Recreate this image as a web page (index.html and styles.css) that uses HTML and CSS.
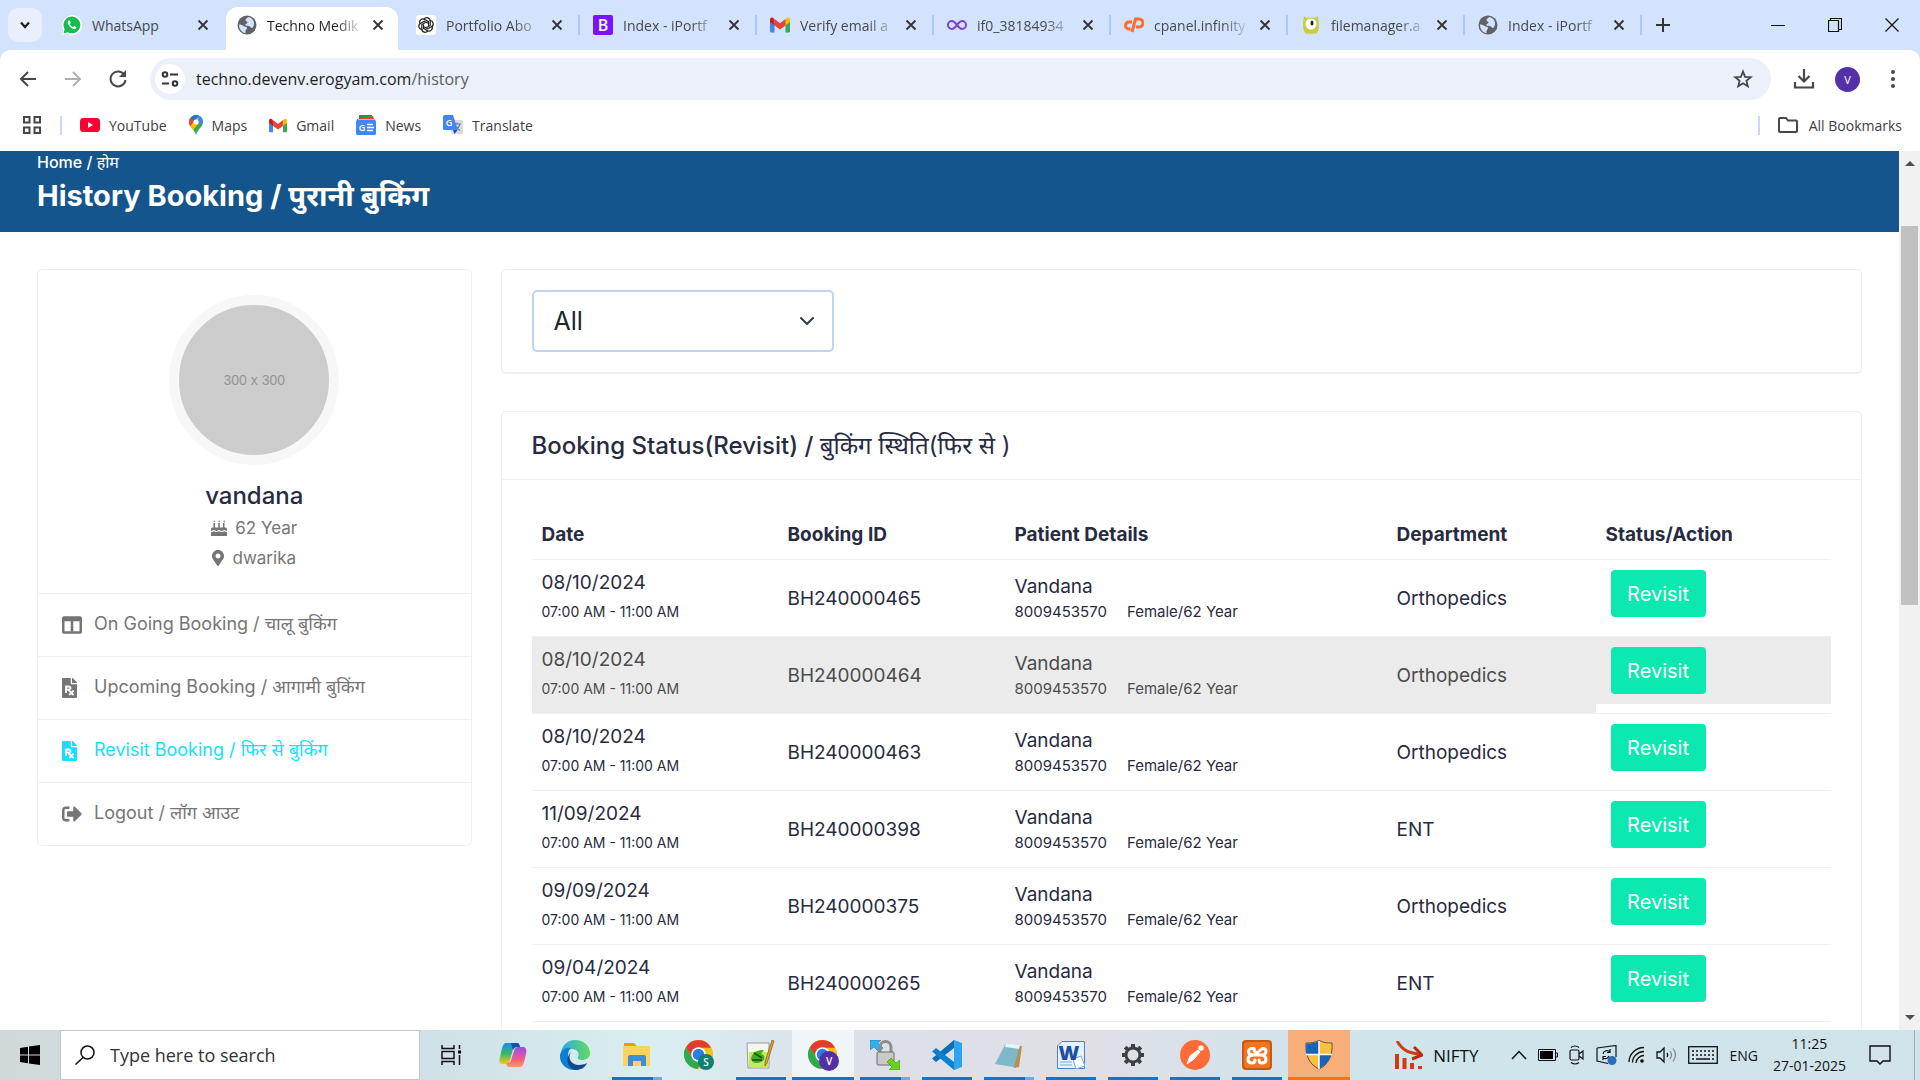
FILE: index.html
```html
<!DOCTYPE html>
<html lang="en">
<head>
  <meta charset="UTF-8" />
  <title>Techno Medik - History Booking</title>
  <link rel="stylesheet" href="styles.css">
</head>
<body>

<!-- shared icons -->
<svg class="defs" width="0" height="0">
  <symbol id="close" viewBox="0 0 12 12"><path d="M1.5 1.5l9 9M10.5 1.5l-9 9" stroke="currentColor" stroke-width="1.8" fill="none"/></symbol>
  <symbol id="globe" viewBox="0 0 20 20"><circle cx="10" cy="10" r="9.5" fill="#5f6368"/><path d="M2 9.500c2 0 3 .5 4.500 1.500s3.500.5 3.500 2-1.500 1.500-1.500 3v2.200C4.500 17.500 2 14 2 9.500zM11 2c-1 1.500-2.500 1.500-2.500 3s2 1 2 2.500-2.500 1-2 2.500 4 .5 5 2 1.500 1 2.200.6C18.500 9 17 3 11 2z" fill="#d3e2fd"/></symbol>
  <symbol id="gmail" viewBox="0 0 20 16"><path d="M0 2v12a1.500 1.500 0 0 0 1.500 1.500H4.500V6z" fill="#4285f4"/><path d="M20 2v12a1.500 1.500 0 0 1-1.500 1.500H15.500V6z" fill="#34a853"/><path d="M4.500 3v5.500L0 5V2.500C0 .5 2-.2 3.500 1z" fill="#c5221f"/><path d="M15.500 3v5.500L20 5V2.500C20 .5 18-.2 16.500 1z" fill="#fbbc04"/><path d="M4.500 2l5.500 4.200L15.500 2v6.500L10 12.500 4.500 8.500z" fill="#ea4335"/></symbol>
  <symbol id="rx" viewBox="0 0 384 512"><path fill="currentColor" d="M224 136V0H24C10.700 0 0 10.700 0 24v464c0 13.300 10.700 24 24 24h336c13.300 0 24-10.700 24-24V160H248c-13.200 0-24-10.800-24-24zm68.530 179.480l11.310 11.310c6.250 6.250 6.250 16.380 0 22.630l-29.900 29.900L304 409.380c6.250 6.250 6.250 16.380 0 22.630l-11.310 11.310c-6.250 6.250-16.380 6.250-22.630 0L240 413.250l-30.060 30.060c-6.250 6.250-16.380 6.250-22.630 0L176 432c-6.250-6.250-6.250-16.380 0-22.630l30.060-30.060L146.740 320H128v48c0 8.840-7.160 16-16 16H96c-8.840 0-16-7.160-16-16V208c0-8.840 7.160-16 16-16h80c35.350 0 64 28.650 64 64 0 24.220-13.620 45.050-33.460 55.920L240 345.380l29.900-29.900c6.250-6.250 16.380-6.250 22.630 0zM176 272h-48v-32h48c8.820 0 16 7.180 16 16s-7.180 16-16 16zm208-150.100v6.100H256V0h6.100c6.400 0 12.500 2.500 17 7l97.900 98c4.500 4.500 7 10.600 7 16.900z"/></symbol>
  <symbol id="chrome" viewBox="0 0 32 32"><circle cx="16" cy="16" r="15" fill="#fbc116"/><path d="M16 1a15 15 0 0 0-13 7.500l6.500 11.300L16 9h13A15 15 0 0 0 16 1z" fill="#e33b2e"/><path d="M3 8.500A15 15 0 0 0 15 31l6.500-11.500-6 3.500-6-3.500z" fill="#2da94f"/><circle cx="16" cy="16" r="7.500" fill="#fff"/><circle cx="16" cy="16" r="6" fill="#2a7de1"/></symbol>
  <symbol id="petal" viewBox="0 0 20 20"><path d="M8 4.500a3.300 3.300 0 0 1 6.200 1.800v4.200L10.500 12.600" fill="none" stroke="#222" stroke-width="1.200"/></symbol>
</svg>

<div class="tabstrip">
  <button class="tab-search" aria-label="Search tabs"><svg width="14" height="14" viewBox="0 0 14 14"><path d="M3 4.500l4 4.500 4-4.500" fill="none" stroke="#1f1f1f" stroke-width="2.200"/></svg></button>
  <div class="tab no-line">
    <svg width="20" height="20" viewBox="0 0 20 20"><path d="M0 20l1.500-5A10 10 0 1 1 5 18.600z" fill="#fff"/><path d="M1.500 18.500l1.200-4.200A8.400 8.400 0 1 1 5.800 17.300z" fill="#14bd4c"/><path d="M6.500 5.500c-1.500 1.500-.6 4.200 1.500 6.200s4.500 3.100 6 1.600c.8-.9.6-1.400-1.700-2.400l-1.200 1.200c-1.600-.6-2.800-1.900-3.200-3.200l.8-1C8.200 5.700 7.500 4.700 6.500 5.500z" fill="#fff"/></svg>
    <span class="tab-title full">WhatsApp</span>
    <button class="tab-close" aria-label="Close"><svg width="12" height="12"><use href="#close"/></svg></button>
  </div>
  <div class="tab active no-line">
    <svg width="20" height="20"><use href="#globe"/></svg>
    <span class="tab-title">Techno Medik</span>
    <button class="tab-close" aria-label="Close"><svg width="12" height="12"><use href="#close"/></svg></button>
  </div>
  <div class="tab">
    <svg width="20" height="20" viewBox="0 0 20 20"><rect width="20" height="20" rx="3" fill="#fff"/><use href="#petal" width="20" height="20"/><use href="#petal" width="20" height="20" transform="rotate(60 10 10)"/><use href="#petal" width="20" height="20" transform="rotate(120 10 10)"/><use href="#petal" width="20" height="20" transform="rotate(180 10 10)"/><use href="#petal" width="20" height="20" transform="rotate(240 10 10)"/><use href="#petal" width="20" height="20" transform="rotate(300 10 10)"/></svg>
    <span class="tab-title">Portfolio Abo</span>
    <button class="tab-close" aria-label="Close"><svg width="12" height="12"><use href="#close"/></svg></button>
  </div>
  <div class="tab">
    <svg width="20" height="20" viewBox="0 0 20 20"><rect width="20" height="20" rx="2" fill="#7a12fb"/><text x="10" y="15.500" class="icon-text" font-size="16" fill="#fff">B</text></svg>
    <span class="tab-title">Index - iPortf</span>
    <button class="tab-close" aria-label="Close"><svg width="12" height="12"><use href="#close"/></svg></button>
  </div>
  <div class="tab">
    <svg width="20" height="16"><use href="#gmail"/></svg>
    <span class="tab-title">Verify email a</span>
    <button class="tab-close" aria-label="Close"><svg width="12" height="12"><use href="#close"/></svg></button>
  </div>
  <div class="tab">
    <svg width="20" height="20" viewBox="0 0 20 20"><path d="M10 10C8 7.500 7 6 5 6a4 4 0 0 0 0 8c2 0 3-1.500 5-4s3-4 5-4a4 4 0 0 1 0 8c-2 0-3-1.500-5-4z" fill="none" stroke="#7a45c9" stroke-width="2"/></svg>
    <span class="tab-title">if0_38184934</span>
    <button class="tab-close" aria-label="Close"><svg width="12" height="12"><use href="#close"/></svg></button>
  </div>
  <div class="tab">
    <svg width="20" height="20" viewBox="0 0 20 20"><path d="M8 7H5a3.500 3.500 0 0 0 0 7h1.500M8 17l3.500-13H15a3.800 3.800 0 0 1 0 8h-3" fill="none" stroke="#ff6c2c" stroke-width="3"/></svg>
    <span class="tab-title">cpanel.infinity</span>
    <button class="tab-close" aria-label="Close"><svg width="12" height="12"><use href="#close"/></svg></button>
  </div>
  <div class="tab">
    <svg width="20" height="20" viewBox="0 0 20 20"><path d="M3 1c1 1 2 2 3 1.500h8C15 3 16 2 17 1c0 2 1 5 1 9 0 5-2 8-3 9l-1.500-1-1 1.500L11 18l-1 1.500L8.500 18l-1 1.500-1-1.500L5 19c-1-1-3-4-3-9s1-7 1-9z" fill="#c5cf3f"/><circle cx="10" cy="9" r="5.500" fill="#fff"/><ellipse cx="11" cy="8" rx="1.500" ry="2.500" fill="#222"/></svg>
    <span class="tab-title">filemanager.a</span>
    <button class="tab-close" aria-label="Close"><svg width="12" height="12"><use href="#close"/></svg></button>
  </div>
  <div class="tab">
    <svg width="20" height="20"><use href="#globe"/></svg>
    <span class="tab-title">Index - iPortf</span>
    <button class="tab-close" aria-label="Close"><svg width="12" height="12"><use href="#close"/></svg></button>
  </div>
  <button class="new-tab" aria-label="New tab"><svg width="14" height="14" viewBox="0 0 14 14"><path d="M7 0v14M0 7h14" stroke="#333" stroke-width="2"/></svg></button>
  <div class="win-controls">
    <button aria-label="Minimize"><svg width="14" height="14" viewBox="0 0 14 14"><path d="M0 7.500h14" stroke="#111"/></svg></button>
    <button aria-label="Restore"><svg width="14" height="14" viewBox="0 0 14 14"><path d="M.5 2.500h10v11H.5zM2.500 2.500v-2h11v11h-3" fill="none" stroke="#111" stroke-width="1.200"/></svg></button>
    <button aria-label="Close window"><svg width="14" height="14" viewBox="0 0 14 14"><path d="M.5.5l13 13M13.500.5l-13 13" stroke="#111" stroke-width="1.200"/></svg></button>
  </div>
</div>

<div class="toolbar">
  <button aria-label="Back"><svg width="18" height="18" viewBox="0 0 18 18"><path d="M17 9H2M9 2L2 9l7 7" fill="none" stroke="#474747" stroke-width="2"/></svg></button>
  <button aria-label="Forward"><svg width="18" height="18" viewBox="0 0 18 18"><path d="M1 9h15M9 2l7 7-7 7" fill="none" stroke="#b0b0b0" stroke-width="2"/></svg></button>
  <button aria-label="Reload"><svg width="18" height="18" viewBox="0 0 18 18"><path d="M15.500 5A7.500 7.500 0 1 0 16.500 10" fill="none" stroke="#474747" stroke-width="2"/><path d="M17 0v7h-7z" fill="#474747"/></svg></button>
  <div class="omnibox">
    <button class="site-info" aria-label="Site information"><svg width="18" height="16" viewBox="0 0 18 16"><path d="M9 3.500h8M1 12.500h7" stroke="#333" stroke-width="2"/><circle cx="4" cy="3.500" r="2.300" fill="none" stroke="#333" stroke-width="2"/><circle cx="14" cy="12.500" r="2.300" fill="none" stroke="#333" stroke-width="2"/></svg></button>
    <span class="url">techno.devenv.erogyam.com<span>/history</span></span>
    <button class="star" aria-label="Bookmark this tab"><svg width="20" height="20" viewBox="0 0 20 20"><path d="M10 2.500l2.100 5.300 5.600.4-4.300 3.600 1.400 5.500-4.800-3-4.800 3 1.400-5.500L2.300 8.200l5.600-.4z" fill="none" stroke="#474747" stroke-width="1.800"/></svg></button>
  </div>
  <button aria-label="Downloads"><svg width="22" height="22" viewBox="0 0 22 22"><path d="M11 1v12M5.500 8L11 13.500 16.500 8M2 14v5.500h18V14" fill="none" stroke="#474747" stroke-width="2.200"/></svg></button>
  <button class="profile" aria-label="Profile">V</button>
  <button aria-label="Menu"><svg width="6" height="18" viewBox="0 0 6 18" fill="#474747"><circle cx="3" cy="2" r="2"/><circle cx="3" cy="9" r="2"/><circle cx="3" cy="16" r="2"/></svg></button>
</div>

<div class="bookmarks">
  <button aria-label="Tab groups"><svg width="18" height="18" viewBox="0 0 18 18"><path d="M1 1h5.500v5.500H1zM11.500 1H17v5.500h-5.500zM1 11.500h5.500V17H1zM11.500 11.500H17V17h-5.500z" fill="none" stroke="#474747" stroke-width="2"/></svg></button>
  <i class="bar"></i>
  <a href="#"><svg width="20" height="14" viewBox="0 0 20 14"><rect width="20" height="14" rx="3.500" fill="#f03"/><path d="M8 4l5 3-5 3z" fill="#fff"/></svg>YouTube</a>
  <a href="#"><svg width="14" height="20" viewBox="0 0 14 20"><path d="M7 0a7 7 0 0 1 7 7c0 5-5 6-7 13C5.500 14 0 12 0 7a7 7 0 0 1 7-7z" fill="#34a853"/><path d="M1.500 3A7 7 0 0 1 10 .7L4.500 7.500z" fill="#1a73e8"/><path d="M1.500 3l4 3.300-4.300 5C-.5 8-.3 5 1.500 3z" fill="#ea4335"/><path d="M1.200 11.200L9 2l2 5-7 8z" fill="#fbbc04"/><path d="M10 .7c3 1 4 4 4 6.300l-4 3-1-5z" fill="#4285f4"/><circle cx="7" cy="7" r="2.600" fill="#fff"/></svg>Maps</a>
  <a href="#"><svg width="18" height="15"><use href="#gmail"/></svg>Gmail</a>
  <a href="#"><svg width="20" height="20" viewBox="0 0 20 20"><path d="M3 0h13v8H3z" fill="#0c9d58"/><path d="M1 4l16-3 2 6H1z" fill="#ea4335"/><path d="M2 4h17v5H2z" fill="#ffc107"/><rect y="5" width="20" height="15" rx="1.500" fill="#4285f4"/><text x="6" y="16" class="icon-text" font-size="9" fill="#fff">G</text><path d="M11 9.500h6M11 12.500h7M11 15.500h6" stroke="#fff" stroke-width="1.500"/></svg>News</a>
  <a href="#"><svg width="20" height="20" viewBox="0 0 20 20"><rect x="8" y="5" width="12" height="14" rx="1" fill="#dadce0"/><path d="M10 9h8M14 7.500V9M17 9c-1 4-3 5-5 6.500M12 11l5 4.500" stroke="#5f7f8c" stroke-width="1.100" fill="none"/><path d="M1.500 0H10l5 15H1.500A1.500 1.500 0 0 1 0 13.500v-12A1.500 1.500 0 0 1 1.500 0z" fill="#4285f4"/><path d="M10 15h4.500L11.500 19z" fill="#174ea6"/><text x="6" y="11" class="icon-text" font-size="9" fill="#fff">G</text></svg>Translate</a>
  <div class="all-bookmarks">
    <i class="bar"></i>
    <a href="#"><svg width="20" height="16" viewBox="0 0 20 16"><path d="M1 2.500V14a1 1 0 0 0 1 1h16a1 1 0 0 0 1-1V4.500a1 1 0 0 0-1-1H10L8 1H2a1 1 0 0 0-1 1z" fill="none" stroke="#474747" stroke-width="2"/></svg>All Bookmarks</a>
  </div>
</div>

<div class="viewport">
  <div class="page">
    <header class="breadcrumb-bar">
      <a href="#">Home / <span lang="hi">होम</span></a>
      <h2>History Booking / <span lang="hi">पुरानी बुकिंग</span></h2>
    </header>

    <div class="content">
      <aside class="card sidebar">
        <div class="profile-info">
          <div class="avatar">300 x 300</div>
          <h3>vandana</h3>
          <p><svg width="16" height="16" viewBox="0 0 16 16" fill="currentColor"><path d="M2.500 3h1.500v5H2.500zM7.300 3h1.500v5H7.300zM12 3h1.500v5H12zM3 0l1 1.500-.7 1-.8-1zM8 0l1 1.500-.7 1-.8-1zM13 0l1 1.500-.7 1-.8-1zM1.500 7.500h13A1.500 1.500 0 0 1 16 9v2c-1.500 0-1.500-1-2.700-1S12 11 10.700 11 9.200 10 8 10s-1.500 1-2.700 1S4 10 2.700 10 1.500 11 0 11V9a1.500 1.500 0 0 1 1.500-1.500zM0 12.200c1.500 0 1.500-1 2.700-1s1.400 1 2.600 1 1.500-1 2.700-1 1.500 1 2.700 1 1.400-1 2.600-1 1.200 1 2.700 1V16H0z"/></svg>62 Year</p>
          <p><svg width="12" height="16" viewBox="0 0 384 512" fill="currentColor"><path d="M172.268 501.670C26.970 291.031 0 269.413 0 192 0 85.961 85.961 0 192 0s192 85.961 192 192c0 77.413-26.970 99.031-172.268 309.670-9.535 13.774-29.930 13.773-39.464 0zM192 272c44.183 0 80-35.817 80-80s-35.817-80-80-80-80 35.817-80 80 35.817 80 80 80z"/></svg>dwarika</p>
        </div>
        <nav>
          <a href="#"><svg width="20" height="20" viewBox="0 0 512 512" fill="currentColor"><path d="M464 32H48C21.490 32 0 53.490 0 80v352c0 26.510 21.490 48 48 48h416c26.510 0 48-21.490 48-48V80c0-26.510-21.490-48-48-48zM224 416H64V160h160v256zm224 0H288V160h160v256z"/></svg><span>On Going Booking / चालू बुकिंग</span></a>
          <a href="#"><svg width="15" height="20"><use href="#rx"/></svg><span>Upcoming Booking / आगामी बुकिंग</span></a>
          <a href="#" class="active"><svg width="15" height="20"><use href="#rx"/></svg><span>Revisit Booking / फिर से बुकिंग</span></a>
          <a href="#"><svg width="20" height="20" viewBox="0 0 512 512" fill="currentColor"><path d="M497 273L329 441c-15 15-41 4.500-41-17v-96H152c-13.300 0-24-10.700-24-24v-96c0-13.300 10.700-24 24-24h136V88c0-21.400 25.900-32 41-17l168 168c9.300 9.400 9.300 24.600 0 34zM192 436v-40c0-6.600-5.400-12-12-12H96c-17.700 0-32-14.300-32-32V160c0-17.700 14.300-32 32-32h84c6.600 0 12-5.400 12-12V76c0-6.600-5.400-12-12-12H96c-53 0-96 43-96 96v192c0 53 43 96 96 96h84c6.600 0 12-5.400 12-12z"/></svg><span>Logout / लॉग आउट</span></a>
        </nav>
      </aside>

      <main>
        <section class="card filter">
          <div class="select-box">
            <select id="status" aria-label="Booking filter">
              <option>All</option>
            </select>
            <svg width="16" height="16" viewBox="0 0 16 16"><path d="M2 5l6 6 6-6" fill="none" stroke="#343a40" stroke-width="2" stroke-linecap="round" stroke-linejoin="round"/></svg>
          </div>
        </section>

        <section class="card booking">
          <h4>Booking Status(Revisit) / <span lang="hi">बुकिंग स्थिति(फिर से )</span></h4>
          <div class="table-wrap">
            <table>
              <thead>
                <tr>
                  <th class="col-date">Date</th>
                  <th class="col-id">Booking ID</th>
                  <th class="col-patient">Patient Details</th>
                  <th class="col-dept">Department</th>
                  <th>Status/Action</th>
                </tr>
              </thead>
              <tbody>
                <tr>
                  <td>08/10/2024<small class="time">07:00 AM - 11:00 AM</small></td>
                  <td>BH240000465</td>
                  <td>Vandana<small><span>8009453570</span><span>Female/62 Year</span></small></td>
                  <td>Orthopedics</td>
                  <td class="action"><div><button>Revisit</button></div></td>
                </tr>
                <tr class="hovered">
                  <td>08/10/2024<small class="time">07:00 AM - 11:00 AM</small></td>
                  <td>BH240000464</td>
                  <td>Vandana<small><span>8009453570</span><span>Female/62 Year</span></small></td>
                  <td>Orthopedics</td>
                  <td class="action"><div><button>Revisit</button></div></td>
                </tr>
                <tr>
                  <td>08/10/2024<small class="time">07:00 AM - 11:00 AM</small></td>
                  <td>BH240000463</td>
                  <td>Vandana<small><span>8009453570</span><span>Female/62 Year</span></small></td>
                  <td>Orthopedics</td>
                  <td class="action"><div><button>Revisit</button></div></td>
                </tr>
                <tr>
                  <td>11/09/2024<small class="time">07:00 AM - 11:00 AM</small></td>
                  <td>BH240000398</td>
                  <td>Vandana<small><span>8009453570</span><span>Female/62 Year</span></small></td>
                  <td>ENT</td>
                  <td class="action"><div><button>Revisit</button></div></td>
                </tr>
                <tr>
                  <td>09/09/2024<small class="time">07:00 AM - 11:00 AM</small></td>
                  <td>BH240000375</td>
                  <td>Vandana<small><span>8009453570</span><span>Female/62 Year</span></small></td>
                  <td>Orthopedics</td>
                  <td class="action"><div><button>Revisit</button></div></td>
                </tr>
                <tr>
                  <td>09/04/2024<small class="time">07:00 AM - 11:00 AM</small></td>
                  <td>BH240000265</td>
                  <td>Vandana<small><span>8009453570</span><span>Female/62 Year</span></small></td>
                  <td>ENT</td>
                  <td class="action"><div><button>Revisit</button></div></td>
                </tr>
              </tbody>
            </table>
          </div>
        </section>
      </main>
    </div>
  </div>
  <div class="scrollbar">
    <svg width="10" height="6" viewBox="0 0 10 6"><path d="M0 6l5-5 5 5z" fill="#505050"/></svg>
    <div class="track"><div class="thumb"></div></div>
    <svg width="10" height="6" viewBox="0 0 10 6"><path d="M0 0l5 5 5-5z" fill="#505050"/></svg>
  </div>
</div>

<footer class="taskbar">
  <button class="start" aria-label="Start"><svg width="20" height="20" viewBox="0 0 20 20"><path d="M0 3l8-1.200v7.700H0zM9 1.600L20 0v9.500H9zM0 10.500h8v7.700L0 17zM9 10.500h11V20L9 18.400z"/></svg></button>
  <label class="search">
    <svg width="20" height="20" viewBox="0 0 20 20"><circle cx="12.500" cy="7.500" r="6.500" fill="none" stroke="#111" stroke-width="1.500"/><path d="M8 12.500L.5 19.500" stroke="#111" stroke-width="1.500"/></svg>
    <input type="text" placeholder="Type here to search" aria-label="Search">
  </label>
  <div class="apps">
    <button aria-label="Task View"><svg width="20" height="20" viewBox="0 0 20 20"><path d="M1 0v3.500h12V0M1 20v-3.500h12V20M1 6.500h12v7H1zM18.500 0v4M18.500 10v10" fill="none" stroke="#111" stroke-width="1.500"/><path d="M17 5.500h3v3h-3z"/></svg></button>
    <button aria-label="Copilot"><svg width="30" height="30" viewBox="0 0 30 30"><defs><linearGradient id="cop1" x2="0" y2="1"><stop stop-color="#1790e8"/><stop offset=".5" stop-color="#3ab56f"/><stop offset="1" stop-color="#ffca0a"/></linearGradient><linearGradient id="cop2" x2="0" y2="1"><stop stop-color="#9a4bea"/><stop offset=".6" stop-color="#f05a8c"/><stop offset="1" stop-color="#ff9a56"/></linearGradient></defs><path d="M8 3h11c2 0 2.500 2 3 4h-3c-3 0-4 2-5 6l-2 7c-1 3-2 4-4 4H4c-3 0-3-3-2-7l2-9c1-3 2-5 4-5z" fill="url(#cop1)"/><path d="M22 27H11c-2 0-2.500-2-3-4 4 1 5-2 6-6l2-6c1-3 2-4 4-4h5c3 0 4 3 3 7l-2 8c-1 3-2 5-4 5z" fill="url(#cop2)"/><path d="M13 3h6c2 0 2.500 2 3 4h-3c-2 0-3 1-4 3z" fill="#1450b8"/></svg></button>
    <button aria-label="Edge"><svg width="30" height="30" viewBox="0 0 30 30"><defs><linearGradient id="edge1"><stop stop-color="#2aa7e8"/><stop offset="1" stop-color="#63dc5c"/></linearGradient></defs><path d="M1 13C2 5 8 0 15 0c9 0 15 6 15 13 0 5-4 7-8 7-3 0-5-1-4-3 2-4-1-8-6-8-6 0-10 4-11 4z" fill="url(#edge1)"/><path d="M0 15C1 10 6 7 11 8c-5 3-5 21 9 21-12 4-21-5-20-14z" fill="#0f7fd6"/><path d="M11 12c-5 8 3 17 16 11-2 5-7 7-11 7-8-1-12-11-5-18z" fill="#114a8b"/></svg></button>
    <button class="open more" aria-label="File Explorer"><svg width="28" height="26" viewBox="0 0 28 26"><path d="M1 1h10l3 3H1z" fill="#e3a008"/><path d="M0 4h27v20H0z" fill="#ffd35c"/><path d="M5 24V15a2 2 0 0 1 2-2h14a2 2 0 0 1 2 2v9h-5v-5h-8v5z" fill="#3d8fd8"/></svg></button>
    <button aria-label="Chrome"><svg width="32" height="32" viewBox="0 0 32 32"><use href="#chrome" width="31" height="31"/><circle cx="23" cy="23" r="8" fill="#0b8074"/><text x="23" y="27" class="icon-text" font-size="10" fill="#fff">S</text></svg></button>
    <button class="open" aria-label="Notepad++"><svg width="30" height="30" viewBox="0 0 30 30"><path d="M1 3h22v25H2z" fill="#f4f6f2" stroke="#9a9a9a"/><path d="M3 12h19v15H3z" fill="#c5e85e"/><path d="M5 18c2-6 6-8 13-8l-3 4c4 0 5 6 0 8-4 2-10 1-10-4z" fill="#3fae2a"/><path d="M8 13l8 5M6 20h10" stroke="#1d4f18" stroke-width="1.500"/><path d="M28 1l-7 22-2 3v-4L26 0z" fill="#e8a32c" stroke="#6b4210" stroke-width=".6"/></svg></button>
    <button class="open current" aria-label="Chrome profile V"><svg width="32" height="32" viewBox="0 0 32 32"><use href="#chrome" width="31" height="31"/><circle cx="22" cy="22" r="10" fill="#5430a8"/><text x="22" y="26" class="icon-text" font-size="10" fill="#fff">V</text></svg></button>
    <button class="open more" aria-label="WinSCP"><svg width="30" height="30" viewBox="0 0 30 30"><path d="M0 0h11L8 3l5 5-4 4-5-5-4 3z" fill="#35b1ea" stroke="#1b75b0" stroke-width=".6"/><path d="M10 14V7a5 5 0 0 1 11 0v7" fill="none" stroke="#8d8d8d" stroke-width="3"/><rect x="7" y="12" width="17" height="13" rx="1" fill="#c9c9c9" stroke="#6d6d6d"/><path d="M30 30H19l3-3-5-5 4-4 5 5 4-3z" fill="#6cd01f" stroke="#3f8f0d" stroke-width=".6"/></svg></button>
    <button class="open" aria-label="VS Code"><svg width="30" height="30" viewBox="0 0 30 30"><path d="M22 0v8L4 22l-4-3.500z" fill="#0a6fb8"/><path d="M22 30v-8L4 8l-4 3.500z" fill="#0f80cf"/><path d="M22 0l8 3v24l-8 3z" fill="#2aa5ee"/></svg></button>
    <button class="open more" aria-label="Notepad"><svg width="28" height="28" viewBox="0 0 28 28"><path d="M11 3l16 2-3 21-5 1z" fill="#b98d4a"/><path d="M11 2l14 2-6 22-19-3z" fill="#7fb9c9"/><path d="M11 2l14 2-1 4-14-2z" fill="#eaf3f5"/></svg></button>
    <button class="open" aria-label="Word"><svg width="28" height="28" viewBox="0 0 28 28"><path d="M5 .5h22.500v27H.5V5z" fill="#e9f1fb" stroke="#4d7fc4"/><path d="M16 18l8-3 4 10-9 3zM3 21h12M3 24h12" fill="#fff" stroke="#7fa5da"/><text x="12" y="19" class="icon-text bold" font-size="20" fill="#1c4fa1">W</text></svg></button>
    <button class="open" aria-label="Settings"><svg width="24" height="24" viewBox="0 0 24 24"><circle cx="12" cy="12" r="7" fill="none" stroke="#3c4043" stroke-width="3"/><path d="M12 1v3M12 20v3M1 12h3M20 12h3M4.200 4.200l2.200 2.200M17.600 17.600l2.200 2.200M4.200 19.800l2.200-2.200M17.600 6.400l2.200-2.200" stroke="#3c4043" stroke-width="4"/></svg></button>
    <button class="open" aria-label="Postman"><svg width="30" height="30" viewBox="0 0 30 30"><circle cx="15" cy="15" r="15" fill="#ff6c37"/><path d="M7 24l3-8 8-6 2 2-6 7zM10 22l9-11" fill="#fff" stroke="#fff"/><circle cx="21" cy="8" r="2.800" fill="#fff"/></svg></button>
    <button class="open" aria-label="XAMPP"><svg width="30" height="30" viewBox="0 0 30 30"><rect width="30" height="30" rx="4" fill="#c75a12"/><rect x="2" y="2" width="26" height="26" rx="3" fill="#f2741e"/><path d="M12 8.500H9a3 3 0 0 0-1 5.500c2 1 3 1 5 1h5c4 0 6 2 6 4.500S22 23 20 23s-3-1-3-3M13 20c0 2-1 3-3 3s-4-1-4-3.500S8 15 12 15M12 8.500c0 3 1 4 3 4s4-4 6-4 3 1 3 3-2 3.500-5 3.500" fill="none" stroke="#fff" stroke-width="3" stroke-linecap="round"/></svg></button>
    <button class="open alert" aria-label="User Account Control"><svg width="28" height="30" viewBox="0 0 28 30"><path d="M14 0c4 3 9 3 13 3 1 13-4 22-13 26C5 25 0 16 1 3c4 0 9 0 13-3z" fill="#ffc13b" stroke="#555"/><path d="M14 1v13.500H1.500C1 11 1 7 1.500 3.500 6 3.500 10 3 14 1zM14 14.500h12C24 21 20 26 14 28.500z" fill="#1a63b8"/><path d="M14 1v28M1 14.500h26" stroke="#fff" stroke-width="1.500"/></svg></button>
  </div>
  <div class="tray">
    <a href="#" class="stock"><svg width="28" height="28" viewBox="0 0 28 28"><path d="M2 0c6 10 12 12 22 13" fill="none" stroke="#d13c12" stroke-width="3"/><path d="M19 6l8 8-10 4" fill="none" stroke="#b32d0c" stroke-width="3"/><path d="M2 13v15M9.500 17v11M17 22v6M25 25v3" stroke="#cf3a12" stroke-width="4"/></svg>NIFTY</a>
    <svg width="16" height="10" viewBox="0 0 16 10"><path d="M1 9l7-7.500L15 9" fill="none" stroke="#111" stroke-width="1.500"/></svg>
    <svg width="20" height="12" viewBox="0 0 20 12"><path d="M.5.500h17v11H.5zM18 4h1.500v4H18" fill="none" stroke="#111"/><path d="M2 2h13v8H2z"/></svg>
    <svg width="16" height="20" viewBox="0 0 16 20"><rect x="1" y="5" width="9" height="10" rx="1.500" fill="none" stroke="#111" stroke-width="1.200"/><path d="M10 9l4-3v8l-4-3M2 2.500q4-3 8 0M2 17.500q4 3 8 0" fill="none" stroke="#111" stroke-width="1.200"/></svg>
    <svg width="21" height="20" viewBox="0 0 21 20"><path d="M1 3l19-2.500V12M12 18.500L1 16V3M7 9a4 4 0 0 1 7-2M14 4v3.500h-3M13 11a4 4 0 0 1-6 2M7 15v-3.500h3" fill="none" stroke="#111" stroke-width="1.200"/><circle cx="16" cy="15.500" r="4.500" fill="#2a6ebb"/></svg>
    <svg width="17" height="18" viewBox="0 0 17 18"><g fill="none" stroke="#111" stroke-width="1.300"><path d="M1 16C1 8 8 1.500 16 1.500M4.500 16.500C4.500 10.500 10 5.500 16 5.500M8 17C8 13 12 9.500 16 9.500"/></g><circle cx="14" cy="15" r="1.800"/></svg>
    <svg width="21" height="18" viewBox="0 0 21 18"><path d="M1 6h3l4-4v14l-4-4H1zM11 7q1.500 2 0 4" fill="none" stroke="#111" stroke-width="1.300"/><path d="M14 5q3 4 0 8M17 2.500q5 6.500 0 13" fill="none" stroke="#7b8589" stroke-width="1.200"/></svg>
    <svg width="30" height="18" viewBox="0 0 30 18"><rect x=".7" y=".7" width="28.600" height="16.600" fill="none" stroke="#111" stroke-width="1.300"/><path d="M4 5h22M4 9h22" stroke="#111" stroke-width="1.600" stroke-dasharray="2 2"/><path d="M4 13h2M8 13h14M24 13h2" stroke="#111" stroke-width="1.300"/></svg>
    <span class="lang">ENG</span>
    <time class="clock">11:25<br>27-01-2025</time>
    <button class="notify" aria-label="Notifications"><svg width="22" height="20" viewBox="0 0 22 20"><path d="M1 1h20v15h-7l-3 3-3-3H1z" fill="none" stroke="#111" stroke-width="1.400"/></svg></button>
    <span class="show-desktop"></span>
  </div>
</footer>

</body>
</html>
```

FILE: styles.css
```css
* {
  box-sizing: border-box;
}
body {
  margin: 0;
  height: 100vh;
  display: flex;
  flex-direction: column;
  overflow: hidden;
  background: #fff;
  font-family: "Open Sans", "Noto Sans", sans-serif;
  color: #272b41;
}
.defs {
  position: absolute;
}
button {
  font: inherit;
  background: none;
  border: none;
  padding: 0;
  display: flex;
  align-items: center;
  justify-content: center;
}
a {
  color: inherit;
  text-decoration: none;
}
svg {
  flex: none;
}
.icon-text {
  font-family: "Open Sans", sans-serif;
  font-weight: 600;
  text-anchor: middle;
}
.icon-text.bold {
  font-weight: 800;
}

/* browser tabs */
.tabstrip {
  display: flex;
  align-items: center;
  height: 50px;
  flex: none;
  background: #d3e2fd;
  padding-left: 8px;
}
.tab-search {
  width: 34px;
  height: 34px;
  margin-right: 7px;
  border-radius: 10px;
  background: #e9effc;
}
.tab {
  position: relative;
  display: flex;
  align-items: center;
  flex: 0 1 177px;
  min-width: 0;
  height: 36px;
  padding: 0 17px 0 13px;
  font-size: 14px;
  color: #45494e;
}
.tab::after {
  content: "";
  position: absolute;
  right: 0;
  top: 8px;
  width: 2px;
  height: 20px;
  background: #a8c7fa;
}
.tab.no-line::after {
  display: none;
}
.tab.active {
  align-self: flex-end;
  flex-basis: 172px;
  height: 43px;
  margin-right: 5px;
  padding: 0 14px 7px 11px;
  background: #fff;
  border-radius: 12px 12px 0 0;
  color: #1f1f1f;
}
.tab-title {
  flex: 1;
  min-width: 0;
  margin: 0 8px 0 10px;
  white-space: nowrap;
  mask-image: linear-gradient(to right, #000 70%, transparent);
}
.tab-title.full {
  mask-image: none;
}
.tab-close {
  color: #333;
}
.new-tab {
  width: 42px;
  height: 36px;
}
.win-controls {
  display: flex;
  margin-left: auto;
}
.win-controls button {
  width: 57px;
  height: 50px;
}

/* address bar */
.toolbar {
  display: flex;
  align-items: center;
  height: 50px;
  flex: none;
  padding: 8px 24px 0 19px;
  margin-bottom: 1px;
  box-shadow: 0 -20px 0 #d3e2fd;
  border-radius: 10px 10px 0 0;
  background: #fff;
  gap: 27px;
  z-index: -1;
}
.omnibox {
  display: flex;
  align-items: center;
  flex: 1;
  height: 42px;
  margin: 0 -5px 0 -4px;
  padding: 0 18px 0 5px;
  border-radius: 21px;
  background: #ebf0fa;
}
.site-info {
  width: 30px;
  height: 30px;
  border-radius: 50%;
  background: #fff;
}
.url {
  flex: 1;
  margin-left: 11px;
  font-size: 16px;
  color: #1f1f1f;
}
.url span {
  color: #5a5e63;
}
.profile {
  width: 25px;
  height: 25px;
  margin: 0 3px 0 -7px;
  border-radius: 50%;
  background: #5430a8;
  color: #fff;
  font-size: 11px;
}

/* bookmarks */
.bookmarks {
  display: flex;
  align-items: center;
  height: 50px;
  flex: none;
  padding: 0 18px 2px 23px;
  font-size: 14px;
  color: #3c4043;
}
.bookmarks a {
  display: flex;
  align-items: center;
  gap: 9px;
  margin-right: 22px;
}
.bar {
  width: 2px;
  height: 19px;
  margin: 0 18px 0 19px;
  background: #c7dafc;
}
.all-bookmarks {
  display: flex;
  align-items: center;
  margin-left: auto;
}
.all-bookmarks a {
  gap: 11px;
  margin-right: 0;
}

/* page area */
.viewport {
  display: flex;
  flex: 1;
  min-height: 0;
  overflow: hidden;
}
.page {
  flex: 1;
  min-width: 0;
  overflow: hidden;
  font-family: Inter, "Noto Sans Devanagari", "Noto Sans", sans-serif;
}
.breadcrumb-bar {
  height: 81px;
  padding: 0 37px;
  background: #15558d;
  color: #fff;
}
.breadcrumb-bar a {
  display: block;
  font-size: 16px;
  line-height: 22px;
  font-weight: 500;
}
.breadcrumb-bar h2 {
  margin: 0;
  font-size: 29px;
  line-height: 46px;
  font-weight: 700;
}
.breadcrumb-bar a span,
.booking h4 span {
  font-weight: 400;
}
.content {
  display: grid;
  grid-template-columns: repeat(4, 1fr);
  gap: 29px;
  align-items: start;
  padding: 37px 37px 40px 37px;
}
.card {
  border: 1px solid #f0f0f0;
  border-radius: 5px;
  background: #fff;
}
.profile-info {
  padding: 25px 20px 20px;
  text-align: center;
}
.avatar {
  display: flex;
  align-items: center;
  justify-content: center;
  width: 170px;
  height: 170px;
  margin: 0 auto 16px;
  border: 10px solid #f7f7f7;
  border-radius: 50%;
  background: #ccc;
  color: #969696;
  font: 14px "Liberation Sans", Arial, sans-serif;
}
.profile-info h3 {
  margin: 0 0 2px;
  font-size: 24px;
  line-height: 30px;
  font-weight: 500;
}
.profile-info p {
  display: flex;
  align-items: center;
  justify-content: center;
  gap: 8px;
  margin: 0;
  font-size: 17px;
  line-height: 30px;
  color: #757575;
}
.sidebar nav a {
  display: flex;
  align-items: center;
  height: 63px;
  padding: 0 24px;
  border-top: 1px solid #f0f0f0;
  font-size: 18px;
  color: #757575;
}
.sidebar nav svg {
  margin-right: 12px;
}
.sidebar nav svg[width="15"] {
  margin-right: 17px;
}
.sidebar nav .active {
  color: #15dfff;
}

main {
  grid-column: span 3;
  display: flex;
  flex-direction: column;
  gap: 37px;
}
.filter {
  padding: 20px 30px;
  border-bottom-width: 2px;
}
.select-box {
  position: relative;
  width: 302px;
}
.select-box select {
  display: block;
  width: 100%;
  height: 62px;
  padding: 0 20px;
  appearance: none;
  border: 2px solid #bfd4f5;
  border-radius: 5px;
  background: #fff;
  color: #212529;
  font: inherit;
  font-size: 25px;
}
.select-box svg {
  position: absolute;
  right: 19px;
  top: 23px;
}
.booking h4 {
  margin: 0;
  padding: 0 30px;
  border-bottom: 1px solid #f0f0f0;
  font-size: 24px;
  line-height: 67px;
  font-weight: 500;
}
.table-wrap {
  padding: 30px 30px 40px;
}
table {
  width: 100%;
  table-layout: fixed;
  border-collapse: separate;
  border-spacing: 0;
  font-size: 19px;
}
th {
  height: 50px;
  padding: 0 10px;
  border-bottom: 1px solid #f0f0f0;
  font-size: 19px;
  font-weight: 700;
  text-align: left;
}
.col-date {
  width: 246px;
}
.col-id {
  width: 227px;
}
.col-patient {
  width: 382px;
}
.col-dept {
  width: 209px;
}
td {
  height: 77px;
  padding: 2px 10px 0;
  border-bottom: 1px solid #f0f0f0;
  line-height: 26px;
}
td small {
  display: flex;
  gap: 20px;
  font-size: 15px;
  line-height: 24px;
}
td .time {
  line-height: 32px;
  font-size: 14px;
}
.action {
  padding: 0;
  vertical-align: top;
}
.action div {
  padding: 10px 15px;
}
.action button {
  width: 95px;
  height: 47px;
  border-radius: 4px;
  background: #0ce9b0;
  color: #fff;
  font-size: 20px;
}
.hovered {
  color: #4b4b4d;
}
.hovered td:not(.action),
.hovered .action div {
  background: #ebebeb;
}

.scrollbar {
  display: flex;
  flex-direction: column;
  align-items: center;
  width: 21px;
  padding: 9px 2px;
  background: #f1f1f1;
}
.track {
  flex: 1;
  width: 100%;
  padding: 60px 0 0;
}
.thumb {
  height: 48%;
  background: #c1c1c1;
}

/* taskbar */
.taskbar {
  display: flex;
  align-items: center;
  height: 50px;
  flex: none;
  background: linear-gradient(to right, #d0d9da 0, #cfe0e6 22%, #d9eef1 34%, #dde0e8 45%, #e0dfe6 57%, #d0e4ec 68%, #d0e3ea 100%);
  color: #111;
}
.start {
  width: 60px;
  height: 50px;
}
.search {
  display: flex;
  align-items: center;
  gap: 15px;
  width: 360px;
  height: 50px;
  padding-left: 14px;
  border: 1px solid #c4c8c9;
  background: #fff;
}
.search input {
  flex: 1;
  min-width: 0;
  border: none;
  outline: none;
  padding: 0;
  font: inherit;
  font-size: 18px;
}
.search input::placeholder {
  color: #333;
}
.apps {
  display: flex;
}
.apps button {
  position: relative;
  width: 62px;
  height: 50px;
}
.open::after {
  content: "";
  position: absolute;
  left: 6px;
  right: 6px;
  bottom: 0;
  height: 3px;
  background: #0078d7;
}
.more::after {
  background: linear-gradient(to right, #0078d7 82%, #66aee8 82%);
}
.apps .current {
  background: #f0f6f8;
}
.current::after {
  left: 0;
  right: 0;
}
.apps .alert {
  background: #f7ae79;
}
.alert::after {
  left: 0;
  right: 0;
  background: #ff7300;
}
.tray {
  display: flex;
  align-items: center;
  gap: 11px;
  margin-left: auto;
}
.stock {
  display: flex;
  align-items: center;
  gap: 10px;
  margin-right: 22px;
  font-size: 17px;
}
.lang {
  font-size: 14px;
}
.clock {
  margin-left: 4px;
  font-size: 14px;
  line-height: 22px;
  text-align: center;
}
.notify {
  width: 46px;
  height: 50px;
}
.show-desktop {
  width: 6px;
  height: 50px;
  border-left: 1px solid #9fb0b8;
}
```
